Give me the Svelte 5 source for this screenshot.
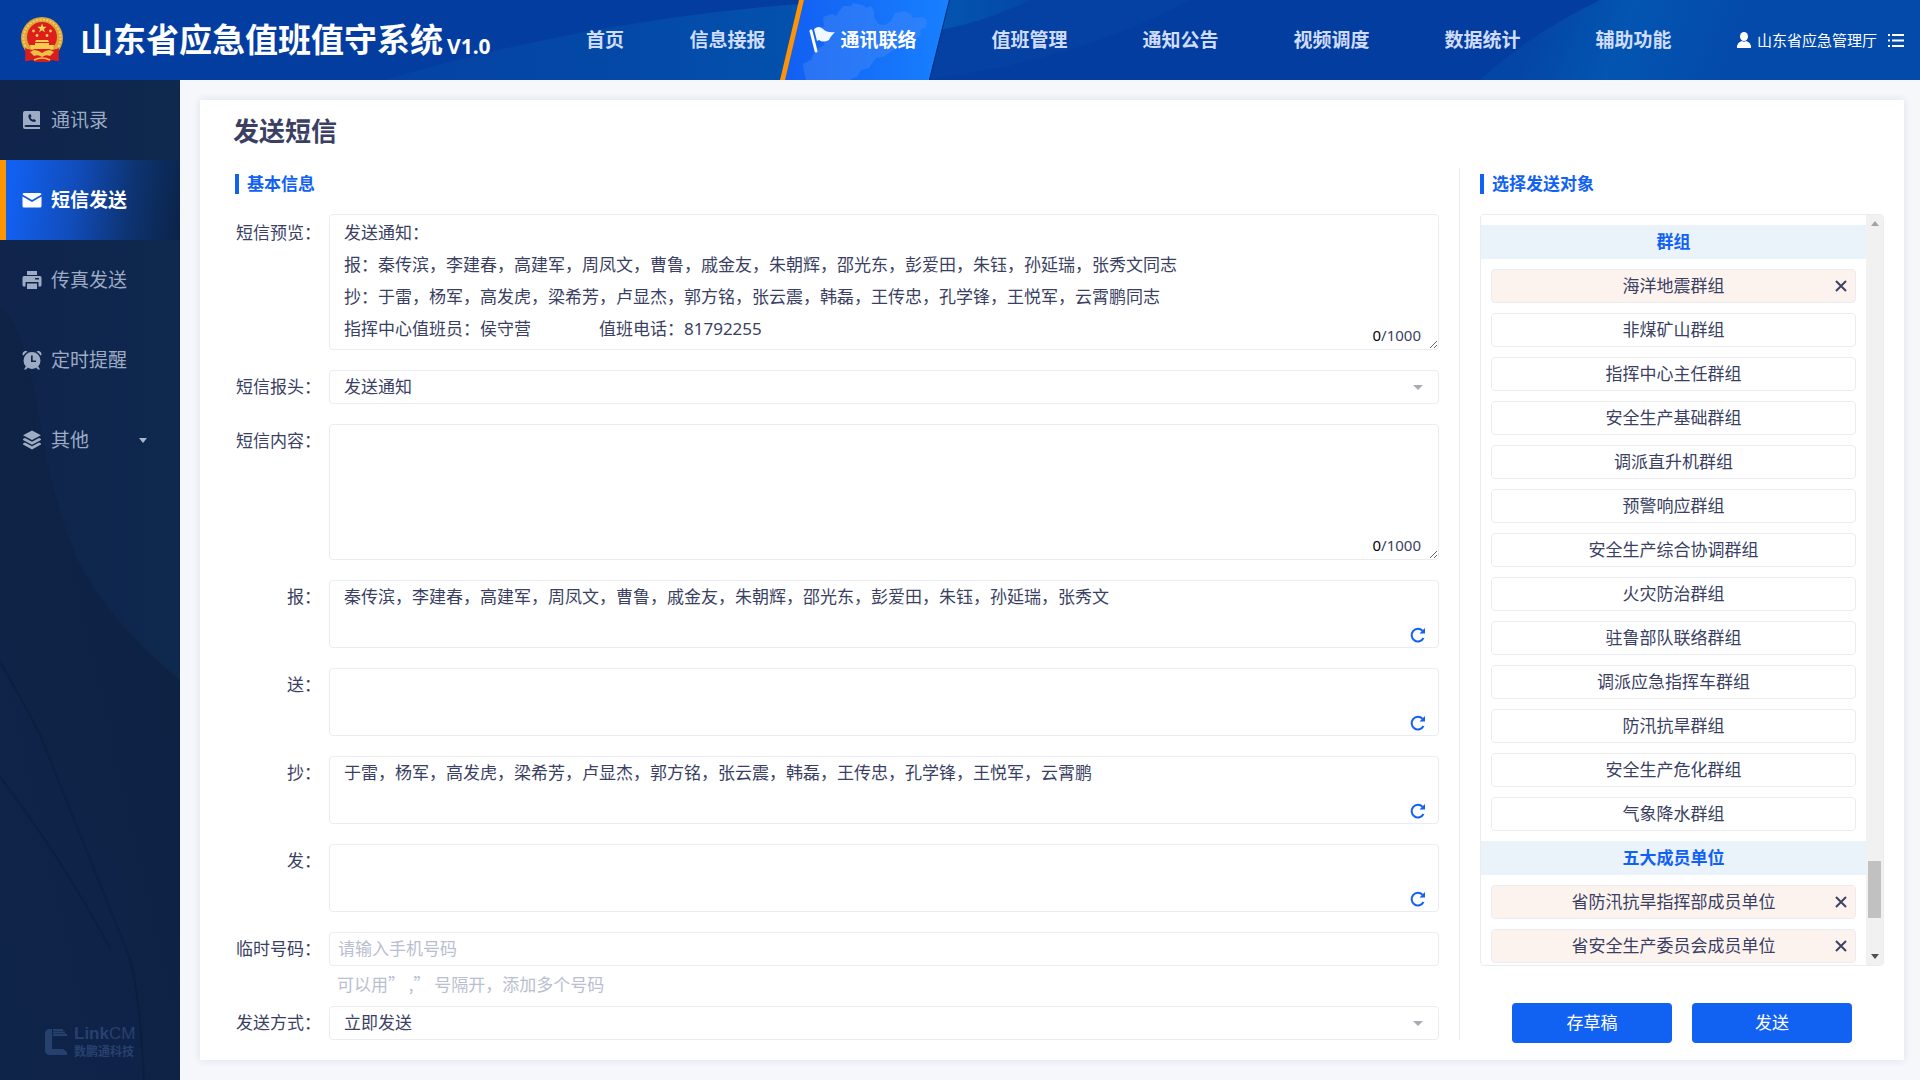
<script>
  const navLeft = ['信息接报'];
  const navRight = ['值班管理', '通知公告', '视频调度', '数据统计', '辅助功能'];

  const menu = [
    { id: 'book', label: '通讯录' },
    { id: 'mail', label: '短信发送', active: true },
    { id: 'print', label: '传真发送' },
    { id: 'clock', label: '定时提醒' },
    { id: 'layers', label: '其他', more: true }
  ];

  const reportTo = '秦传滨，李建春，高建军，周凤文，曹鲁，戚金友，朱朝辉，邵光东，彭爱田，朱钰，孙延瑞，张秀文';
  const copyTo = '于雷，杨军，高发虎，梁希芳，卢显杰，郭方铭，张云震，韩磊，王传忠，孔学锋，王悦军，云霄鹏';

  const preview = [
    '发送通知：',
    '报：' + reportTo + '同志',
    '抄：' + copyTo + '同志',
    '指挥中心值班员：侯守营　　　　值班电话：81792255'
  ].join('\n');

  const recipients = [
    { id: 'report', label: '报', value: reportTo },
    { id: 'deliver', label: '送', value: '' },
    { id: 'copy', label: '抄', value: copyTo },
    { id: 'issue', label: '发', value: '' }
  ];

  let groups = $state([
    {
      title: '群组',
      items: [
        { name: '海洋地震群组', on: true },
        { name: '非煤矿山群组', on: false },
        { name: '指挥中心主任群组', on: false },
        { name: '安全生产基础群组', on: false },
        { name: '调派直升机群组', on: false },
        { name: '预警响应群组', on: false },
        { name: '安全生产综合协调群组', on: false },
        { name: '火灾防治群组', on: false },
        { name: '驻鲁部队联络群组', on: false },
        { name: '调派应急指挥车群组', on: false },
        { name: '防汛抗旱群组', on: false },
        { name: '安全生产危化群组', on: false },
        { name: '气象降水群组', on: false }
      ]
    },
    {
      title: '五大成员单位',
      items: [
        { name: '省防汛抗旱指挥部成员单位', on: true },
        { name: '省安全生产委员会成员单位', on: true }
      ]
    }
  ]);
</script>

<div class="page">
  <header class="top">
    <svg class="top-bg" viewBox="0 0 1920 80" preserveAspectRatio="none" aria-hidden="true">
      <defs>
        <linearGradient id="hb1" x1="0" x2="1"><stop offset="0" stop-color="#0443a3" /><stop offset="0.6" stop-color="#0449a7" /><stop offset="1" stop-color="#0352ad" /></linearGradient>
        <linearGradient id="hb2" x1="0" x2="1"><stop offset="0" stop-color="#0355b0" /><stop offset="1" stop-color="#0448a6" /></linearGradient>
        <linearGradient id="hb3" gradientUnits="userSpaceOnUse" x1="1540" y1="20" x2="1720" y2="90"><stop offset="0" stop-color="#0446a6" /><stop offset="0.42" stop-color="#0355b1" /><stop offset="1" stop-color="#044aaa" /></linearGradient>
      </defs>
      <rect width="1920" height="80" fill="#043da0" />
      <path d="M385 80Q590 20 800 4V80Z" fill="url(#hb1)" />
      <path d="M930 0H1190Q1080 60 925 80Z" fill="#0441a2" />
      <path d="M945 0H1030Q985 22 940 30Z" fill="url(#hb2)" />
      <path d="M1480 80Q1530 34 1600 0H1920V80Z" fill="url(#hb3)" />
    </svg>

    <div class="brand">
      <svg class="emblem" viewBox="0 0 42 46" aria-hidden="true">
        <path d="M5 30L4 44l7-1 4 2h12l4-2 7 1-1-14Z" fill="#d81e1c" />
        <circle cx="21" cy="21" r="21" fill="#dba53a" />
        <circle cx="21" cy="21" r="18.500" fill="none" stroke="#f3cf6a" stroke-width="2" stroke-dasharray="2 1.500" />
        <circle cx="21" cy="20" r="15" fill="#dc1f1c" />
        <path d="M21 6.500l1.200 3.300h3.500l-2.800 2.100 1 3.400-2.900-2-2.900 2 1-3.400-2.800-2.100h3.500Z" fill="#fbd95c" />
        <g fill="#f6cb4e"><circle cx="12.500" cy="14" r="1.400" /><circle cx="29.500" cy="14" r="1.400" /><circle cx="16" cy="18.500" r="1.400" /><circle cx="26" cy="18.500" r="1.400" />
          <path d="M15 23h12l1 2H14ZM14 26h14v2H14ZM9 28h24l-1 4H10Z" /></g>
        <path d="M4 31q17 7 34 0l-1 13-6-1-4 2H15l-4-2-6 1Z" fill="#d81e1c" />
        <path d="M9 35q6-4 12 1 6-5 12-1l-4 4q-4-2-8 1-4-3-8-1Z" fill="#eebf4a" />
        <path d="M13 43q8-4 16 0" fill="none" stroke="#eebf4a" stroke-width="1.500" />
      </svg>
      <h1>山东省应急值班值守系统</h1>
      <span class="version">V1.0</span>
    </div>

    <nav class="nav" aria-label="主导航">
      <a class="short" href="#home">首页</a>
      {#each navLeft as item}<a href="#nav">{item}</a>{/each}
      <a class="current" href="#contact" aria-current="page">
        <svg class="tab" viewBox="0 0 170 80" aria-hidden="true">
          <defs><linearGradient id="tb"><stop offset="0" stop-color="#125ff2" /><stop offset="1" stop-color="#1880ff" /></linearGradient></defs>
          <path d="M24 0H169L149 80H4Z" fill="url(#tb)" />
          <path d="M19 0h5L5 80H0Z" fill="#ff9308" />
          <path d="M169 0h1l-20 80h-1Z" fill="#062f7c" />
          <path d="M24 72l-1-8 8-4 4-10 9-5 1-9-6-6 5-4-1-9 9-3 4 2 7-10 8 0 2-3 9 2 4 3 5-2 3 5 0 6 4 7 7 1 6-4 4-8 9-2 7 3 2 4 9-1 5 3-1 7-6 3 1 6-10 4-10 0-6 9-12 8-7 1-7 10-8 2-4 7-6 2 0 7-8 0-3 4-6-5-9 0-5-5-8 0-5 3Z" fill="#4c8df8" opacity="0.4" />
          <path d="M31 31l5 20" stroke="#fff" stroke-width="3" stroke-linecap="round" />
          <path d="M34 29q5-4 9 0 4 4 12 3-5 5-6 8-6 3-10 0l-2 1Z" fill="#f3f7ff" />
        </svg>
        <span>通讯联络</span>
      </a>
      {#each navRight as item}<a href="#nav">{item}</a>{/each}
    </nav>

    <div class="user">
      <svg width="14" height="16" viewBox="0 0 14 16" aria-hidden="true"><ellipse cx="7" cy="4.500" rx="4" ry="4.500" fill="#fff" /><path d="M0 16v-2q1-4 5-5 2 1.500 4 0 4 1 5 5v2Z" fill="#fff" /></svg>
      <span>山东省应急管理厅</span>
      <button type="button" aria-label="菜单">
        <svg width="16" height="13" viewBox="0 0 16 13" aria-hidden="true"><path d="M0 1h2M4 1h12M0 6.500h2M4 6.500h12M0 12h2M4 12h12" stroke="#fff" stroke-width="2" /></svg>
      </button>
    </div>
  </header>

  <div class="body">
    <aside class="side">
      <svg class="side-bg" viewBox="0 0 180 1000" preserveAspectRatio="none" aria-hidden="true">
        <defs>
          <linearGradient id="sb" x1="0" x2="1"><stop offset="0" stop-color="#10244c" /><stop offset="1" stop-color="#0e284e" /></linearGradient>
          <linearGradient id="sc" x1="0" y1="1" x2="1" y2="0"><stop offset="0" stop-color="#0f2449" /><stop offset="1" stop-color="#0d2142" /></linearGradient>
        </defs>
        <rect width="180" height="1000" fill="url(#sb)" />
        <path d="M0 225Q26 252 36 320 56 440 82 488 118 550 180 600V1000H0Z" fill="url(#sc)" />
        <path d="M0 585Q60 690 125 800L145 1000H0Z" fill="#0f2349" opacity="0.500" />
        <path d="M0 582Q20 615 40 655L125 866Q138 890 144 1000M0 697Q60 775 110 868" fill="none" stroke="#0b1c3a" stroke-width="2" opacity="0.600" />
      </svg>
      <nav class="menu" aria-label="侧边菜单">
        {#each menu as item}
          <a href="#{item.id}" class:active={item.active}>
            <svg width="20" height="20" viewBox="0 0 20 20" fill="currentColor" aria-hidden="true">
              {#if item.id === 'book'}
                <path fill-rule="evenodd" d="M3 1h14q1 0 1 1v13H4q-1.500 0-1.500 1T4 17h14v2H3q-2 0-2-2V3q0-2 2-2ZM7 4.500q-1 1-.5 3 1.500 4 5.500 4.500 1.500 0 2-1.500l-2-1.500-1.200.8Q9 9 8.500 7.500l1-1L8.500 4Z" />
              {:else if item.id === 'mail'}
                <path d="M.500 4.500Q.500 3 2 3h16q1.500 0 1.500 1.500L10 10Z" /><path d="M.500 6.500L10 12l9.500-5.500V16q0 1.500-1.500 1.500H2Q.500 17.500.500 16Z" />
              {:else if item.id === 'print'}
                <path d="M5 1h10v4H5Z" /><path fill-rule="evenodd" d="M2 6h16q1.500 0 1.500 2v7q0 1.500-1.500 1.500h-1.500V12h-13v4.500H2Q.500 16.500.500 15V8Q.500 6 2 6Zm11 2v1.500h4V8Z" /><path d="M5 13.500h10V19H5Z" />
              {:else if item.id === 'clock'}
                <path fill-rule="evenodd" d="M10 2a8.500 8.500 0 1 1 0 17 8.500 8.500 0 1 1 0-17ZM9 5.500v6.500h5v-1.600h-3.300V5.500Z" /><path d="M.500 5Q0 1.500 4 .8l1.500 1Q3 3 1.500 5.500ZM19.500 5Q20 1.500 16 .8l-1.500 1Q17 3 18.500 5.500ZM4 16l-2 3.500h2l2-2ZM16 16l2 3.500h-2l-2-2Z" />
              {:else}
                <path d="M10 .500l9 4.800-9 4.800-9-4.800Z" /><path d="M1 9l2-1 7 3.700L17 8l2 1v1l-9 4.700L1 10ZM1 13.500l2-1 7 3.700 7-3.700 2 1v1l-9 4.900-9-4.900Z" />
              {/if}
            </svg>
            <span>{item.label}</span>
            {#if item.more}<i class="caret"></i>{/if}
          </a>
        {/each}
      </nav>
      <div class="vendor">
        <svg width="22" height="26" viewBox="0 0 22 26" aria-hidden="true"><path d="M5 0h2v20h11l4 3v3H5q-5 0-5-5V5Q0 0 5 0Z" fill="currentColor" /><path d="M8 1h10M8 3.500h12M8 6h14" stroke="currentColor" stroke-width="2" /></svg>
        <div><p class="v-name"><b>Link</b>CM</p><p class="v-cn">数鹏通科技</p></div>
      </div>
    </aside>

    <main>
      <form class="card" onsubmit={(e) => e.preventDefault()}>
        <h2>发送短信</h2>
        <div class="panels">
          <section class="left">
            <h3>基本信息</h3>
            <div class="rows">
              <div class="row first">
                <label for="preview">短信预览：</label>
                <div class="field big"><textarea id="preview" value={preview}></textarea><span class="count"><b>0</b>/1000</span></div>
              </div>
              <div class="row">
                <label for="heading">短信报头：</label>
                <div class="field line"><select id="heading"><option>发送通知</option></select><i class="caret"></i></div>
              </div>
              <div class="row">
                <label for="content">短信内容：</label>
                <div class="field big"><textarea id="content"></textarea><span class="count"><b>0</b>/1000</span></div>
              </div>
              {#each recipients as r}
                <div class="row">
                  <label for={r.id}>{r.label}：</label>
                  <div class="field mid">
                    <textarea id={r.id} value={r.value}></textarea>
                    <button class="refresh" type="button" aria-label="重置">
                      <svg width="16" height="16" viewBox="0 0 16 16" aria-hidden="true"><path d="M13.500 11A6.300 6.300 0 1 1 12.500 3.800" fill="none" stroke="#1161f2" stroke-width="2" /><path d="M15 1v5.500H9.500Z" fill="#1161f2" /></svg>
                    </button>
                  </div>
                </div>
              {/each}
              <div class="row">
                <label for="phone">临时号码：</label>
                <div class="field line"><input id="phone" type="text" placeholder="请输入手机号码" /></div>
              </div>
            </div>
            <p class="hint">可以用”&nbsp;,”&nbsp;号隔开，添加多个号码</p>
            <div class="row">
              <label for="mode">发送方式：</label>
              <div class="field line"><select id="mode"><option>立即发送</option></select><i class="caret"></i></div>
            </div>
          </section>

          <section class="right">
            <h3>选择发送对象</h3>
            <div class="picker">
              <div class="list">
                {#each groups as g}
                  <h4>{g.title}</h4>
                  {#each g.items as item}
                    <button type="button" class="item" class:on={item.on} aria-pressed={item.on} onclick={() => (item.on = !item.on)}>
                      <span>{item.name}</span>
                      {#if item.on}<svg width="12" height="12" viewBox="0 0 12 12" aria-hidden="true"><path d="M1 1l10 10M11 1L1 11" stroke="#3d4266" stroke-width="2" /></svg>{/if}
                    </button>
                  {/each}
                {/each}
              </div>
              <div class="bar" aria-hidden="true"><i class="up"></i><i class="thumb"></i><i class="down"></i></div>
            </div>
            <div class="actions">
              <button type="button">存草稿</button>
              <button type="submit">发送</button>
            </div>
          </section>
        </div>
      </form>
    </main>
  </div>
</div>

<style>
  :global(body) { margin: 0; }
  .page, .page :global(*) { box-sizing: border-box; }
  .page {
    min-height: 100vh;
    display: flex;
    flex-direction: column;
    font: 17px/32px 'Noto Sans', 'Noto Sans CJK SC', sans-serif;
    color: #3a3f63;
    background: #f5f7fb;
  }
  h1, h2, h3, h4, p { margin: 0; }
  a { text-decoration: none; }
  button, input, select, textarea { font: inherit; color: inherit; margin: 0; }
  button { cursor: pointer; border: 0; padding: 0; background: none; }

  .top { position: relative; height: 80px; display: flex; align-items: center; color: #fff; overflow: hidden; }
  .top-bg { position: absolute; inset: 0; width: 100%; height: 100%; }
  .brand { position: relative; flex: none; width: 558px; display: flex; align-items: center; padding-left: 21px; }
  .emblem { width: 42px; height: 46px; margin-right: 17px; }
  h1 { font-size: 33px; line-height: 48px; font-weight: 700; white-space: nowrap; }
  .version { font-size: 21px; line-height: 24px; font-weight: 700; margin-left: 4px; padding-top: 12px; }
  .nav { position: relative; flex: 1; display: flex; align-items: center; height: 100%; }
  .nav a { position: relative; flex: 0 1 151px; line-height: 80px; text-align: center; font-size: 19px; font-weight: 700; color: #cfdcfb; white-space: nowrap; }
  .nav .short { flex-basis: 94px; }
  .nav .current { color: #fff; }
  .nav .current span { position: relative; }
  .tab { position: absolute; left: -23px; top: 0; width: 170px; height: 80px; }
  .user { position: relative; display: flex; align-items: center; font-size: 15px; padding-right: 16px; white-space: nowrap; }
  .user span { margin: 0 11px 0 6px; }
  .user button { display: flex; }

  .body { flex: 1; display: flex; }
  .side { position: relative; flex: none; width: 180px; display: flex; flex-direction: column; justify-content: space-between; background: #0e2348; }
  .side-bg { position: absolute; inset: 0; width: 100%; height: 100%; }
  .menu { position: relative; }
  .menu a { display: flex; align-items: center; height: 80px; padding-left: 22px; font-size: 19px; color: #9dabc4; }
  .menu svg { flex: none; margin-right: 9px; }
  .menu .active { border-left: 6px solid #ff9500; padding-left: 16px; color: #fff; font-weight: 700; background: linear-gradient(97deg, #1260f0 5%, #114cba 40%, #0d3370 72%, #0b2348); }
  .caret { width: 0; height: 0; border: 5px solid transparent; border-top-color: #a8abb2; border-bottom: 0; }
  .menu .caret { margin: 0 33px 0 auto; border-width: 4px; border-bottom: 0; border-top: 5px solid #aab6ca; }
  .vendor { position: relative; display: flex; align-items: center; gap: 7px; padding: 0 0 21px 45px; color: #27416f; }
  .v-name { font: 17px/18px 'Liberation Sans', sans-serif; }
  .v-cn { font: 700 12px/16px 'Noto Sans CJK SC', sans-serif; }

  main { flex: 1; min-width: 0; padding: 20px 16px 20px 20px; }
  .card { min-height: 100%; padding: 0 20px 20px 33px; background: #fff; box-shadow: 0 0 8px rgba(40, 60, 110, 0.12); }
  h2 { font-size: 26px; line-height: 62px; padding-bottom: 6px; font-weight: 700; }
  .panels { display: grid; grid-template-columns: minmax(0, 1fr) 425px; column-gap: 20px; padding-left: 2px; }
  h3 { margin: 6px 0 20px; border-left: 4px solid #1161f2; padding-left: 8px; font-size: 17px; line-height: 20px; color: #1161f2; font-weight: 700; }
  .rows { display: flex; flex-direction: column; gap: 20px; }
  .row { display: grid; grid-template-columns: 94px minmax(0, 1fr); }
  .row label { line-height: 34px; text-align: right; padding-right: 8px; white-space: nowrap; }
  .first label { padding-top: 2px; }
  .field { position: relative; display: flex; border: 1px solid #ebecef; border-radius: 4px; }
  .field textarea { width: 100%; border: 0; outline: 0; background: none; padding: 0 14px; resize: none; line-height: 32px; }
  .big { height: 136px; }
  .field.big textarea { padding: 2px 14px; resize: vertical; }
  .mid { height: 68px; }
  .line { height: 34px; }
  .field select, .field input { width: 100%; border: 0; outline: 0; background: none; appearance: none; padding: 0 14px; }
  .field input { padding: 0 8px; }
  .field input::placeholder { color: #b9bed0; opacity: 1; }
  .field .caret { position: absolute; right: 15px; top: 14px; pointer-events: none; }
  .count { position: absolute; right: 17px; bottom: 4px; font-size: 15px; line-height: 20px; }
  .count b { font-weight: 400; color: #000; }
  .refresh { position: absolute; right: 12px; bottom: 4px; display: flex; }
  .hint { padding-left: 102px; line-height: 36px; height: 40px; color: #b9bed0; font-family: 'Noto Sans CJK SC', sans-serif; }

  .right { display: flex; flex-direction: column; border-left: 1px solid #ebecef; padding-left: 20px; }
  .picker { flex: 1; display: flex; border: 1px solid #ebecef; border-radius: 4px; overflow: hidden; }
  .list { flex: 1; display: flex; flex-direction: column; gap: 10px; padding-top: 10px; }
  h4 { height: 34px; line-height: 34px; text-align: center; font-size: 17px; color: #1161f2; background: #eaf2fa; }
  .item { position: relative; height: 34px; margin: 0 10px; line-height: 32px; border: 1px solid #ebecef; border-radius: 4px; background: #fff; }
  .on { background: #fcf3ee; }
  .item svg { position: absolute; right: 8px; top: 10px; }
  .bar { flex: none; width: 17px; background: #f1f1f1; display: flex; flex-direction: column; align-items: center; padding: 6px 0; }
  .up { border: 4px solid transparent; border-top: 0; border-bottom: 5px solid #a3a3a3; }
  .down { border: 4px solid transparent; border-bottom: 0; border-top: 5px solid #505050; }
  .thumb { width: 13px; height: 57px; background: #c1c1c1; margin: auto 0 36px; }
  .actions { display: flex; justify-content: center; gap: 20px; margin: 37px 0 -3px; }
  .actions button { width: 160px; height: 40px; border-radius: 4px; background: #1161f2; color: #fff; }
</style>
